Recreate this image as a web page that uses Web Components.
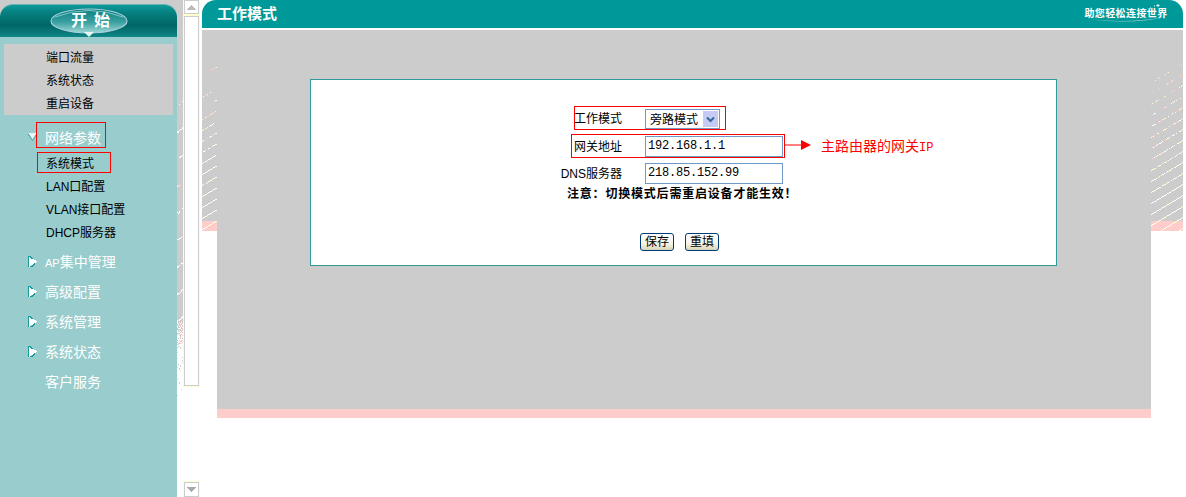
<!DOCTYPE html>
<html lang="zh-CN">
<head>
<meta charset="utf-8">
<title>工作模式</title>
<style>
  html, body { margin: 0; height: 497px; overflow: hidden; background: #fff; }
  body {
    display: flex;
    font: 12px "Liberation Sans", "Noto Sans CJK SC", sans-serif;
    color: #000;
  }
  .latin { font-size: 11px; }
</style>
</head>
<body>
  <side-nav>
    <nav-item slot="quick">端口流量</nav-item>
    <nav-item slot="quick">系统状态</nav-item>
    <nav-item slot="quick">重启设备</nav-item>

    <nav-group open marked>网络参数</nav-group>
    <nav-item marked>系统模式</nav-item>
    <nav-item>LAN口配置</nav-item>
    <nav-item>VLAN接口配置</nav-item>
    <nav-item>DHCP服务器</nav-item>
    <nav-group class="first" closed><span class="latin">AP</span>集中管理</nav-group>
    <nav-group closed>高级配置</nav-group>
    <nav-group closed>系统管理</nav-group>
    <nav-group closed>系统状态</nav-group>
    <nav-group>客户服务</nav-group>
  </side-nav>
  <pixel-stripes kind="gutter" w="6" h="497"></pixel-stripes>
  <scroll-rail></scroll-rail>
  <work-frame heading="工作模式" slogan="助您轻松连接世界">
    <mode-form></mode-form>
  </work-frame>

<script>
// small repeatable noise, the picture must not change between runs
function noise(seed) {
  let s = seed | 0;
  return () => {
    s = (s + 0x6d2b79f5) | 0;
    let t = Math.imul(s ^ (s >>> 15), 1 | s);
    t = (t + Math.imul(t ^ (t >>> 7), 61 | t)) ^ t;
    return ((t ^ (t >>> 14)) >>> 0) / 4294967296;
  };
}

class PixelStripes extends HTMLElement {
  connectedCallback() {
    const w = +this.getAttribute('w');
    const h = +this.getAttribute('h');
    const kind = this.getAttribute('kind');
    const c0 = +this.getAttribute('c0') || 0;
    const rnd = noise(w * 31 + h + c0);
    const dots = [];
    const dot = (x, y, c) => dots.push(`<rect x="${x}" y="${y}" width="1" height="1" fill="${c}"/>`);

    let base;
    if (kind === 'gutter') {
      base = `<rect width="${w}" height="322" fill="#ccc"/>`;
      for (let y = 95; y < 322; y++) {
        for (let x = 0; x < w; x++) {
          const band = (y + x * 0.8 + 4) % 27;
          if (band < 2 && rnd() < 0.2 + (y - 95) / 300) dot(x, y, rnd() < 0.2 ? '#fcc' : '#fff');
        }
      }
      for (let y = 322; y < 400; y++) {
        for (let x = 0; x < w; x++) {
          const p = y < 345 ? 0.75 - (y - 322) / 50 : 0.12 - (y - 345) / 500;
          if (rnd() < p) dot(x, y, rnd() < 0.6 ? '#ccc' : '#fcc');
        }
      }
    } else {
      base = `<rect width="${w}" height="191" fill="#ccc"/><rect y="191" width="${w}" height="10" fill="#fcc"/>`;
      for (let c = c0; c < 226; c += 11) {
        const t = Math.min(1, (c - c0) / 125);
        let on = false;
        for (let x = 0; x < w; x++) {
          const y = Math.round(c - x * 0.6);
          if (y >= h) continue;
          const keep = 0.5 + t * 0.5;
          const start = 0.12 + t * 0.88 + (x / w) * 0.15 * (1 - t);
          on = rnd() < (on ? keep : start);
          if (!on) continue;
          const r = rnd();
          let col = '#fff';
          if (y >= 191) col = r < 0.5 ? '#ffc' : '#fff';
          else if (r > t + 0.2) col = '#fcc';
          else if (r > t * 0.85) col = '#ffc';
          dot(x, y, col);
        }
      }
    }

    this.attachShadow({ mode: 'open' });
    this.shadowRoot.innerHTML = `
      <style>
        :host { display: block; flex: none; width: ${w}px; height: ${h}px; }
        svg { display: block; }
      </style>
      <svg width="${w}" height="${h}" shape-rendering="crispEdges">${base}${dots.join('')}</svg>
    `;
  }
}
customElements.define('pixel-stripes', PixelStripes);

class SideNav extends HTMLElement {
  connectedCallback() {
    this.attachShadow({ mode: 'open' });
    this.shadowRoot.innerHTML = `
      <style>
        :host {
          display: block;
          flex: none;
          width: 177px;
          height: 497px;
          background: #99cccc;
        }
        .top { background: #ccc; padding-top: 4px; }
        .banner {
          display: grid;
          place-items: center;
          height: 33px;
          border-radius: 13px 13px 0 0;
          border-top: 1px solid #66b3b3;
          box-sizing: border-box;
          background: linear-gradient(#0f9a9a 0, #067f7f 8px, #006666 20px, #0a7a7a 28px, #0d8c8c 33px);
        }
        .banner > * { grid-area: 1 / 1; }
        .banner svg { display: block; }
        .start {
          display: flex;
          gap: 7px;
          margin: -1px 0 0 4px;
          color: #fff;
          font-size: 16px;
          font-weight: 700;
          line-height: 20px;
        }
        .quick {
          box-sizing: border-box;
          height: 71px;
          margin: 7px 4px 0;
          padding-top: 2px;
          background: #ccc;
        }
        .tree { padding-top: 9px; }
      </style>
      <div class="top">
        <div class="banner">
          <svg width="90" height="32" viewBox="0 0 90 32">
            <defs>
              <linearGradient id="egg" x1="0" y1="0" x2="0" y2="1">
                <stop offset="0" stop-color="#0a7f80"/>
                <stop offset=".55" stop-color="#3aa0a0"/>
                <stop offset="1" stop-color="#a0d8d6"/>
              </linearGradient>
            </defs>
            <ellipse cx="45" cy="16" rx="38" ry="12" fill="url(#egg)" stroke="#a9cfe0" stroke-width="1.2"/>
            <path d="M11 12 Q45 -1 79 12" fill="none" stroke="#7fc4c6" stroke-width="1"/>
            <path d="M40 27 H50 L45 32 Z" fill="#e9f6f4"/>
          </svg>
          <div class="start"><span>开</span><span>始</span></div>
        </div>
      </div>
      <div class="quick"><slot name="quick"></slot></div>
      <div class="tree"><slot></slot></div>
    `;
  }
}
customElements.define('side-nav', SideNav);

class NavItem extends HTMLElement {
  connectedCallback() {
    const marked = this.hasAttribute('marked');
    this.attachShadow({ mode: 'open' });
    this.shadowRoot.innerHTML = `
      <style>
        :host {
          display: block;
          position: relative;
          height: 23px;
          line-height: 25px;
          padding-left: ${this.slot === 'quick' ? 42 : 46}px;
          color: #000;
          font-size: 12px;
        }
        .mark {
          position: absolute;
          left: 37px;
          top: 0;
          width: 74px;
          height: 21px;
          box-sizing: border-box;
          border: 1px solid #f00;
        }
      </style>
      <slot></slot>${marked ? '<div class="mark"></div>' : ''}
    `;
  }
}
customElements.define('nav-item', NavItem);

class NavGroup extends HTMLElement {
  connectedCallback() {
    const open = this.hasAttribute('open');
    const closed = this.hasAttribute('closed');
    const marked = this.hasAttribute('marked');
    let arrow = '';
    if (open) {
      arrow = `<svg width="9" height="8" viewBox="0 0 9 8"><path d="M0 0H9L4.5 8Z" fill="#e8f6f5"/><path d="M0 .5L4.5 7.5L9 .5" fill="none" stroke="#339999"/></svg>`;
    } else if (closed) {
      arrow = `<svg width="9" height="11" viewBox="0 0 9 11" shape-rendering="crispEdges"><path d="M1 0L9 5.5L1 11Z" fill="#fff"/><path d="M.5 0V11M1 0H2V1H3V2H4V3M1 11H2V10H4V9H5V8H6V7" fill="none" stroke="#189a9a"/></svg>`;
    }
    this.attachShadow({ mode: 'open' });
    this.shadowRoot.innerHTML = `
      <style>
        :host {
          display: flex;
          position: relative;
          box-sizing: border-box;
          align-items: center;
          height: ${open ? 28 : 30}px;
          margin-top: ${this.classList.contains('first') ? 3 : 0}px;
          padding: 0 0 2px 28px;
          color: #fff;
          font-size: 14px;
        }
        .arrow { display: flex; flex: none; width: 17px; }
        svg { display: block; }
        .mark {
          position: absolute;
          left: 36px;
          top: -2px;
          width: 70px;
          height: 26px;
          box-sizing: border-box;
          border: 1px solid #f00;
        }
      </style>
      <span class="arrow">${arrow}</span><span><slot></slot></span>${marked ? '<div class="mark"></div>' : ''}
    `;
  }
}
customElements.define('nav-group', NavGroup);

class ScrollRail extends HTMLElement {
  connectedCallback() {
    this.attachShadow({ mode: 'open' });
    this.shadowRoot.innerHTML = `
      <style>
        :host {
          display: flex;
          flex: none;
          flex-direction: column;
          width: 15px;
          height: 497px;
          margin: 0 3px 0 1px;
        }
        .btn, .track {
          box-sizing: border-box;
          border: 1px solid #ccc;
          box-shadow: 0 0 0 1px #ffc;
          background: #fff;
        }
        .btn {
          display: flex;
          align-items: center;
          justify-content: center;
          height: 14px;
          flex: none;
        }
        .btn.down { height: 15px; margin-top: 96px; }
        .track { height: 370px; margin-top: 2px; }
        svg { display: block; }
      </style>
      <div class="btn"><svg width="9" height="5" viewBox="0 0 9 5" shape-rendering="crispEdges"><path d="M4.5 0L9 5H0Z" fill="#bbb"/></svg></div>
      <div class="track"></div>
      <div class="btn down"><svg width="9" height="5" viewBox="0 0 9 5" shape-rendering="crispEdges"><path d="M0 0H9L4.5 5Z" fill="#aaa"/></svg></div>
    `;
  }
}
customElements.define('scroll-rail', ScrollRail);

class WorkFrame extends HTMLElement {
  connectedCallback() {
    this.attachShadow({ mode: 'open' });
    this.shadowRoot.innerHTML = `
      <style>
        :host { display: block; flex: none; width: 981px; }
        .bar {
          display: flex;
          align-items: center;
          justify-content: space-between;
          height: 28px;
          margin-bottom: 2px;
          padding: 0 15px;
          box-sizing: border-box;
          background: #009999;
          border-radius: 14px 14px 0 0;
          color: #fff;
        }
        h1 {
          margin: 0;
          font-size: 15px;
          font-weight: 700;
          line-height: 24px;
        }
        .slogan { display: grid; place-items: center; width: 84px; height: 20px; }
        .slogan > * { grid-area: 1 / 1; }
        .slogan span {
          margin-top: -3px;
          font-size: 10px;
          font-weight: 700;
          letter-spacing: .4px;
          white-space: nowrap;
        }
        .slogan svg { display: block; }
        .stage { display: flex; align-items: flex-start; }
        .mid { flex: none; width: 934px; }
        .gray {
          height: 330px;
          padding: 49px 0 0 93px;
          background: #ccc;
        }
        .pink { height: 9px; background: #fcc; }
      </style>
      <div class="bar">
        <h1>${this.getAttribute('heading')}</h1>
        <div class="slogan">
          <svg width="84" height="20" viewBox="0 0 84 20" fill="none">
            <path d="M3 15 Q42 20 82 13 Q46 21 3 15Z" fill="#bfe3e3" opacity=".75"/>
            <path d="M70 2h1M74 0v3M72.5 1.5h3M66 4h1" stroke="#fff"/>
          </svg>
          <span>${this.getAttribute('slogan')}</span>
        </div>
      </div>
      <div class="stage">
        <pixel-stripes w="15" h="201" c0="45"></pixel-stripes>
        <div class="mid">
          <div class="gray"><slot></slot></div>
          <div class="pink"></div>
        </div>
        <pixel-stripes w="32" h="201" c0="52"></pixel-stripes>
      </div>
    `;
  }
}
customElements.define('work-frame', WorkFrame);

class SelectBox extends HTMLElement {
  connectedCallback() {
    this.attachShadow({ mode: 'open' });
    this.shadowRoot.innerHTML = `
      <style>
        :host {
          display: flex;
          align-items: center;
          justify-content: space-between;
          box-sizing: border-box;
          width: 75px;
          height: 20px;
          padding: 0 1px 0 4px;
          border: 1px solid #6f9ac8;
          background: #fff;
        }
        .txt { margin-top: -2px; }
        .drop {
          display: flex;
          align-items: center;
          justify-content: center;
          width: 15px;
          height: 16px;
          background: #c6cbf6;
        }
        svg { display: block; }
      </style>
      <span class="txt"><slot></slot></span>
      <div class="drop"><svg width="9" height="7" viewBox="0 0 9 7"><path d="M1 1.5L4.5 5L8 1.5" fill="none" stroke="#2f6a99" stroke-width="2"/></svg></div>
    `;
  }
}
customElements.define('select-box', SelectBox);

class TextField extends HTMLElement {
  connectedCallback() {
    this.attachShadow({ mode: 'open' });
    this.shadowRoot.innerHTML = `
      <style>
        :host {
          display: block;
          flex: none;
          box-sizing: border-box;
          width: 138px;
          height: 21px;
          padding-left: 2px;
          border: 1px solid #6f9ac8;
          background: #fff;
          font: 12px "Liberation Mono", monospace;
          letter-spacing: -.2px;
          line-height: 19px;
        }
      </style>
      <slot></slot>
    `;
  }
}
customElements.define('text-field', TextField);

class PushButton extends HTMLElement {
  connectedCallback() {
    this.attachShadow({ mode: 'open' });
    this.shadowRoot.innerHTML = `
      <style>
        :host {
          display: block;
          box-sizing: border-box;
          width: 34px;
          height: 18px;
          border: 1px solid #003c74;
          border-radius: 3px;
          background: linear-gradient(#fff, #f6f4e8 60%, #d8d4b8);
          text-align: center;
          line-height: 16px;
          font-size: 12px;
        }
      </style>
      <slot></slot>
    `;
  }
}
customElements.define('push-button', PushButton);

class ModeForm extends HTMLElement {
  connectedCallback() {
    this.attachShadow({ mode: 'open' });
    this.shadowRoot.innerHTML = `
      <style>
        :host {
          display: block;
          position: relative;
          box-sizing: border-box;
          width: 747px;
          height: 187px;
          padding-top: 25px;
          border: 1px solid #339999;
          background: #fff;
          font-size: 12px;
        }
        .row { display: flex; align-items: center; height: 27px; }
        .row.first { height: 28px; }
        label { flex: none; width: 311px; margin: -3px 23px 0 0; text-align: right; }
        .hint { display: flex; align-items: center; margin: -3px 0 0 2px; color: #f00; font-size: 14px; }
        .hint svg { display: block; margin-right: 10px; }
        .hint b { font: 12px "Liberation Mono", monospace; }
        .note {
          padding-left: 256px;
          height: 14px;
          font-weight: 700;
          letter-spacing: .8px;
          line-height: 14px;
          white-space: nowrap;
        }
        .actions { display: flex; gap: 11px; margin-top: 32px; padding-left: 329px; }
        .mark {
          position: absolute;
          box-sizing: border-box;
          height: 24px;
          border: 1px solid #f00;
        }
        .m1 { left: 263px; top: 26px; width: 152px; }
        .m2 { left: 260px; top: 54px; width: 214px; }
      </style>
      <div class="row first"><label>工作模式</label><select-box>旁路模式</select-box></div>
      <div class="row">
        <label>网关地址</label><text-field>192.168.1.1</text-field>
        <div class="hint">
          <svg width="26" height="12" viewBox="0 0 26 12"><path d="M0 6H16" stroke="#f00"/><path d="M16 1L26 6L16 11Z" fill="#f00"/></svg>
          <span>主路由器的网关<b>IP</b></span>
        </div>
      </div>
      <div class="row"><label>DNS服务器</label><text-field>218.85.152.99</text-field></div>
      <div class="note">注意：切换模式后需重启设备才能生效！</div>
      <div class="actions"><push-button>保存</push-button><push-button>重填</push-button></div>
      <div class="mark m1"></div>
      <div class="mark m2"></div>
    `;
  }
}
customElements.define('mode-form', ModeForm);
</script>
</body>
</html>
